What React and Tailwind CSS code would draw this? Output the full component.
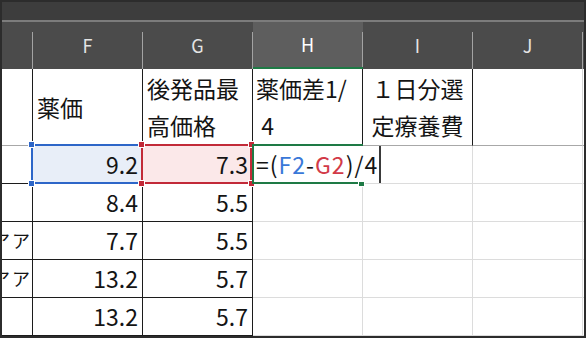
import React from "react";

const font = { fontFamily: '"Noto Sans CJK JP", "Noto Sans", sans-serif' };

const cols = ["", "F", "G", "H", "I", "J"];

const HeaderCell = ({ label, first, active }) => (
  <div className={`flex ${first ? "w-[31px]" : "w-[110px]"} ${active ? "bg-[#5e5e5e] border-b-2 border-[#1e7a45]" : ""}`}>
    <div className={`flex-1 flex items-center justify-center text-[18px] ${active ? "text-white" : "text-[#e4e4e4]"}`}>
      {label}
    </div>
    <div className="mt-[10px] w-px bg-[#a3a3a3]" />
  </div>
);

const Corners = ({ color }) => (
  <>
    <span className={`absolute -left-[4px] -top-[4px] w-[5px] h-[5px] ${color} outline outline-1 outline-white`} />
    <span className={`absolute -right-[4px] -top-[4px] w-[5px] h-[5px] ${color} outline outline-1 outline-white`} />
    <span className={`absolute -left-[4px] -bottom-[4px] w-[5px] h-[5px] ${color} outline outline-1 outline-white`} />
    <span className={`absolute -right-[4px] -bottom-[4px] w-[5px] h-[5px] ${color} outline outline-1 outline-white`} />
  </>
);

const blk = "border-r border-b border-[#1c1c1c]";
const lite = "border-r border-b border-[#dcdcdc]";

const Num = ({ children }) => (
  <div className={`flex items-center justify-end pr-[4px] ${blk}`}>{children}</div>
);

// left column shows only the clipped tail of longer names
const rows = [
  ["8.4", "5.5", ""],
  ["7.7", "5.5", "アア"],
  ["13.2", "5.7", "アア"],
  ["13.2", "5.7", ""],
];

export default function App() {
  return (
    <div style={font} className="w-[586px] h-[338px] overflow-hidden bg-[#2c2c2c] border-2 border-[#2c2c2c] flex flex-col">
      <div className="h-[18px] bg-[#3d3d3d]" />
      <div className="h-[2px] bg-[#7c7c7c]" />
      <div className="h-[47px] bg-[#4b4b4b] flex">
        {cols.map((c, i) => (
          <HeaderCell key={i} label={c} first={i === 0} active={c === "H"} />
        ))}
      </div>

      <div className="flex-1 bg-white grid grid-cols-[31px_110px_110px_110px_110px_110px_1fr] grid-rows-[77px_38px_38px_38px_38px_38px] text-[23px] text-[#141414]">
        {/* row 1 */}
        <div className="border-r border-[#1c1c1c] border-b border-b-[#a8a8a8]" />
        <div className={`flex items-center pl-[4px] ${blk}`}>薬価</div>
        <div className={`flex flex-col justify-center pl-[4px] leading-[37px] ${blk}`}>
          <span>後発品最</span>
          <span>高価格</span>
        </div>
        <div className={`flex flex-col justify-center pl-[3px] leading-[37px] ${blk}`}>
          <span>薬価差1/</span>
          <span>&nbsp;4</span>
        </div>
        <div className="flex flex-col justify-center items-center leading-[37px] border-r border-[#1c1c1c] border-b border-b-[#a8a8a8]">
          <span>１日分選</span>
          <span>定療養費</span>
        </div>
        <div className="border-r border-[#d4d4d4] border-b border-b-[#a8a8a8]" />
        <div className="border-b border-[#a8a8a8]" />

        {/* row 2 */}
        <div className={blk} />
        <div className="relative flex items-center justify-end pr-[4px] bg-[#e8eef8] border-r border-b border-[#1c1c1c]">
          9.2
          <div className="absolute -left-[2px] -top-[2px] -right-[1px] -bottom-[1px] border-2 border-[#2d66c8]">
            <Corners color="bg-[#2d66c8]" />
          </div>
        </div>
        <div className="relative flex items-center justify-end pr-[4px] bg-[#fbe8e9] border-r border-b border-[#1c1c1c]">
          7.3
          <div className="absolute -left-[2px] -top-[2px] right-0 -bottom-[1px] border-2 border-[#c22a38]">
            <Corners color="bg-[#c22a38]" />
          </div>
        </div>
        <div className="relative border-b border-[#dcdcdc]">
          <div className="absolute left-0 top-0 bottom-0 z-10 flex items-center bg-white pl-[3px] whitespace-nowrap tracking-[1px]">
            <span>=(</span>
            <span className="text-[#3a78d8]">F2</span>
            <span>-</span>
            <span className="text-[#d23a48]">G2</span>
            <span>)/4</span>
            <span className="ml-[1px] w-[2px] h-[37px] bg-[#3a3a3a]" />
          </div>
          <div className="absolute z-20 -left-[1px] -top-[2px] w-[111px] h-[2px] bg-[#1e7a45]" />
          <div className="absolute z-20 -left-[1px] -top-[2px] w-[2px] h-[40px] bg-[#1e7a45]" />
          <div className="absolute z-20 -left-[1px] -bottom-[1px] w-[108px] h-[2px] bg-[#1e7a45]" />
          <div className="absolute z-20 left-[106px] -bottom-[3px] w-[5px] h-[4px] bg-[#1e7a45] outline outline-1 outline-white" />
        </div>
        <div className={lite} />
        <div className={lite} />
        <div className="border-b border-[#dcdcdc]" />

        {/* rows 3-6 */}
        {rows.map(([f, g, e], i) => (
          <React.Fragment key={i}>
            <div className={`flex items-center justify-end overflow-hidden whitespace-pre text-[18px] tracking-[2px] ${blk}`}>{e}</div>
            <Num>{f}</Num>
            <Num>{g}</Num>
            <div className={lite} />
            <div className={lite} />
            <div className={lite} />
            <div className="border-b border-[#dcdcdc]" />
          </React.Fragment>
        ))}
      </div>
    </div>
  );
}
